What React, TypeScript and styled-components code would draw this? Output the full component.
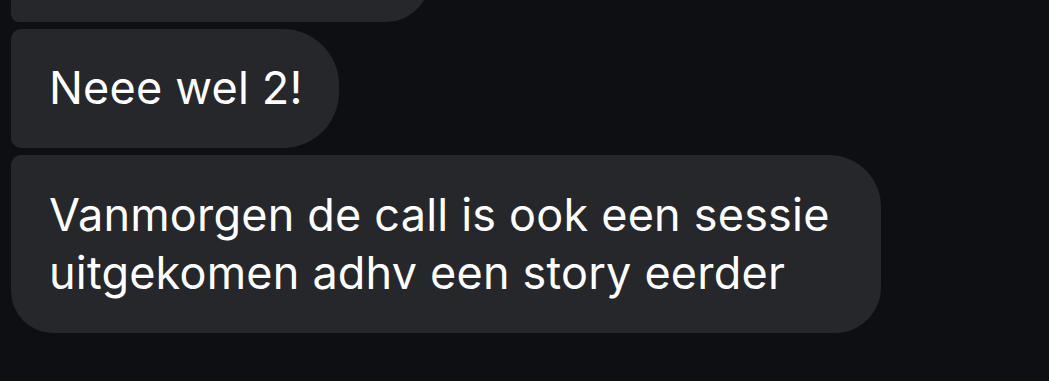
import React from "react";
import styled, { createGlobalStyle } from "styled-components";

const Global = createGlobalStyle`
  html, body { margin: 0; padding: 0; background: #0e0f13; }
  body { width: 1049px; height: 381px; overflow: hidden; }
`;

const Thread = styled.div`
  display: flex;
  flex-direction: column;
  align-items: flex-start;
  gap: 7px;
  padding-left: 11px;
  width: 1049px;
  height: 381px;
  box-sizing: border-box;
  overflow: hidden;
  background: #0e0f13;
  font-family: Inter, "Liberation Sans", sans-serif;
`;

type BubbleProps = { $tl: number; $tr: number; $br: number; $bl: number };

const Bubble = styled.div<BubbleProps>`
  background: #26272b;
  color: #ffffff;
  font-size: 45px;
  line-height: 58px;
  letter-spacing: 0.2px;
  padding: 30px 40px 30px 38px;
  border-radius: ${(p) => `${p.$tl}px ${p.$tr}px ${p.$br}px ${p.$bl}px`};
`;

const Partial = styled(Bubble)`
  width: 419px;
  height: 100px;
  box-sizing: border-box;
  margin-top: -78px;
`;

const Short = styled(Bubble)`
  height: 119px;
  box-sizing: border-box;
  padding-top: 30px;
  padding-right: 36px;
`;

const Long = styled(Bubble)`
  height: 178px;
  box-sizing: border-box;
  padding-top: 31px;
  width: 870px;
`;

export default function App() {
  return (
    <>
      <Global />
      <Thread>
        <Partial $tl={8} $tr={44} $br={44} $bl={8} />
        <Short $tl={10} $tr={56} $br={56} $bl={10}>
          Neee wel 2!
        </Short>
        <Long $tl={10} $tr={52} $br={46} $bl={42}>
          Vanmorgen de call is ook een sessie
          <br />
          uitgekomen adhv een story eerder
        </Long>
      </Thread>
    </>
  );
}
